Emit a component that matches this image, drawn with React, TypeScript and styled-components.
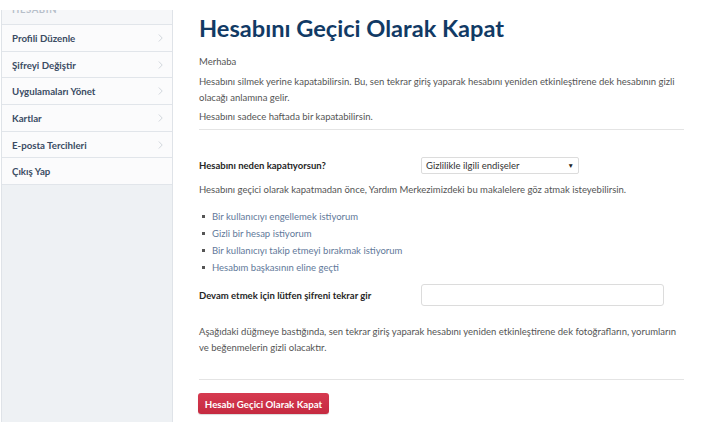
import React from "react";
import styled, { createGlobalStyle } from "styled-components";

const Global = createGlobalStyle`
  html, body { margin: 0; padding: 0; background: #ffffff; }
  body { font-family: Lato, "Open Sans", "Liberation Sans", sans-serif; color: #555; }
  * { box-sizing: border-box; }
`;

const Page = styled.div`
  width: 727px;
  height: 422px;
  overflow: hidden;
  display: flex;
  flex-direction: column;
`;

const TopBar = styled.div`
  height: 10px;
  flex: none;
  background: #fff;
`;

const Body = styled.div`
  flex: 1;
  display: flex;
  min-height: 0;
`;

const Sidebar = styled.nav`
  width: 172px;
  margin-left: 1px;
  flex: none;
  background: #eef1f4;
  border-left: 1px solid #dfe3e8;
  border-right: 1px solid #dfe3e8;
  display: flex;
  flex-direction: column;
`;

const SideHeader = styled.div`
  height: 15px;
  overflow: hidden;
  background: #f6f7f9;
  border-bottom: 1px solid #e1e5ea;
  padding-left: 10px;
  font-size: 9.5px;
  font-weight: 700;
  letter-spacing: 0.6px;
  color: #b7bfca;
  line-height: 10px;
  span { display: block; margin-top: -5px; }
`;

const SideItem = styled.div`
  height: 26.7px;
  display: flex;
  align-items: center;
  justify-content: space-between;
  padding: 0 9px 0 10px;
  background: #fbfbfc;
  border-bottom: 1px solid #e1e5ea;
  font-size: 9.7px;
  font-weight: 700;
  color: #3a4b63;
`;

const Chevron = styled.svg`
  width: 5px;
  height: 8px;
  flex: none;
`;

const Main = styled.main`
  flex: none;
  width: 485px;
  margin-left: 26px;
  display: flex;
  flex-direction: column;
`;

const Title = styled.h1`
  margin: 3px 0 0;
  font-size: 23.6px;
  line-height: 30px;
  font-weight: 700;
  color: #113a65;
`;

const P = styled.p<{ $mt?: number }>`
  margin: ${(p) => p.$mt ?? 0}px 0 0;
  font-size: 9.5px;
  line-height: 16px;
  color: #555;
`;

const Divider = styled.hr<{ $mt: number }>`
  margin: ${(p) => p.$mt}px 0 0;
  border: 0;
  border-top: 1px solid #e4e4e4;
  height: 0;
  flex: none;
`;

const FieldRow = styled.div<{ $mt: number }>`
  margin-top: ${(p) => p.$mt}px;
  display: grid;
  grid-template-columns: 222px 1fr;
  align-items: center;
`;

const Label = styled.label`
  font-size: 9.5px;
  font-weight: 700;
  color: #262626;
`;

const Select = styled.div`
  width: 158px;
  height: 17px;
  border: 1px solid #dcdcdc;
  border-radius: 2px;
  display: flex;
  align-items: center;
  justify-content: space-between;
  padding: 0 4px 0 4px;
  font-size: 9.5px;
  color: #333;
  background: #fff;
`;

const Arrow = styled.span`
  font-size: 6.5px;
  color: #222;
`;

const Input = styled.input`
  width: 243px;
  height: 22px;
  border: 1px solid #dcdcdc;
  border-radius: 3px;
  background: #fff;
  outline: none;
`;

const List = styled.ul`
  margin: 9.5px 0 0;
  padding: 0 0 0 3px;
  list-style: none;
  display: flex;
  flex-direction: column;
`;

const Item = styled.li`
  display: flex;
  align-items: center;
  gap: 7px;
  height: 17px;
  font-size: 9.5px;
  color: #62799a;
`;

const Bullet = styled.span`
  width: 3px;
  height: 3px;
  background: #555;
  flex: none;
`;

const Button = styled.button`
  margin-top: 13px;
  align-self: flex-start;
  width: 131px;
  height: 21px;
  margin-left: -1px;
  border: 0;
  border-radius: 3px;
  background: linear-gradient(#d63a50, #c52a40);
  color: #fff;
  font-family: inherit;
  font-size: 9.7px;
  font-weight: 700;
  padding: 0;
  box-shadow: 0 1px 1px rgba(0,0,0,0.15);
`;

const items = ["Profili Düzenle", "Şifreyi Değiştir", "Uygulamaları Yönet", "Kartlar", "E-posta Tercihleri"];
const links = [
  "Bir kullanıcıyı engellemek istiyorum",
  "Gizli bir hesap istiyorum",
  "Bir kullanıcıyı takip etmeyi bırakmak istiyorum",
  "Hesabım başkasının eline geçti",
];

export default function App() {
  return (
    <Page>
      <Global />
      <TopBar />
      <Body>
        <Sidebar>
          <SideHeader><span>HESABIN</span></SideHeader>
          {items.map((t) => (
            <SideItem key={t}>
              {t}
              <Chevron viewBox="0 0 5 8">
                <path d="M0.8 0.5 L4.2 4 L0.8 7.5" fill="none" stroke="#cdd2d9" strokeWidth="0.9" />
              </Chevron>
            </SideItem>
          ))}
          <SideItem>Çıkış Yap</SideItem>
        </Sidebar>
        <Main>
          <Title>Hesabını Geçici Olarak Kapat</Title>
          <P $mt={11}>Merhaba</P>
          <P $mt={4}>
            Hesabını silmek yerine kapatabilirsin. Bu, sen tekrar giriş yaparak hesabını yeniden etkinleştirene dek hesabının gizli olacağı anlamına gelir.
          </P>
          <P $mt={3}>Hesabını sadece haftada bir kapatabilirsin.</P>
          <Divider $mt={4} />
          <FieldRow $mt={26.5}>
            <Label>Hesabını neden kapatıyorsun?</Label>
            <Select>
              Gizlilikle ilgili endişeler
              <Arrow>▼</Arrow>
            </Select>
          </FieldRow>
          <P $mt={8.5}>
            Hesabını geçici olarak kapatmadan önce, Yardım Merkezimizdeki bu makalelere göz atmak isteyebilirsin.
          </P>
          <List>
            {links.map((l) => (
              <Item key={l}>
                <Bullet />
                {l}
              </Item>
            ))}
          </List>
          <FieldRow $mt={8.5}>
            <Label>Devam etmek için lütfen şifreni tekrar gir</Label>
            <Input type="password" />
          </FieldRow>
          <P $mt={18}>
            Aşağıdaki düğmeye bastığında, sen tekrar giriş yaparak hesabını yeniden etkinleştirene dek fotoğrafların, yorumların ve beğenmelerin gizli olacaktır.
          </P>
          <Divider $mt={23} />
          <Button>Hesabı Geçici Olarak Kapat</Button>
        </Main>
      </Body>
    </Page>
  );
}
